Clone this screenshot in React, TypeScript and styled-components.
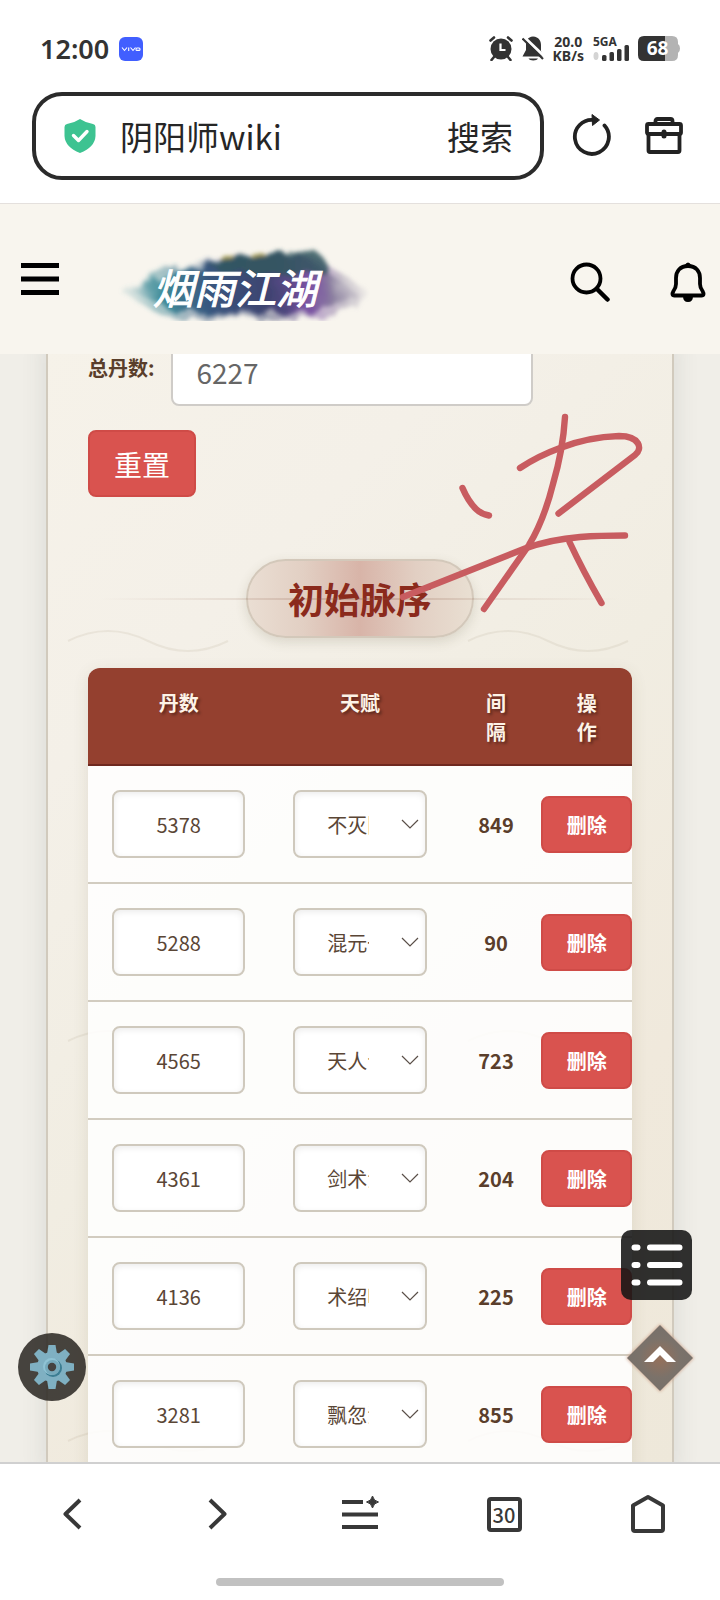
import { useState } from 'react';
import styled, { createGlobalStyle } from 'styled-components';

const fontFamily = `'Noto Sans CJK SC', 'Noto Sans', sans-serif`;

const GlobalStyle = createGlobalStyle`
  * {
    box-sizing: border-box;
  }

  body {
    margin: 0;
    background: #fff;
    font-family: ${fontFamily};
  }

  button, input, select {
    font-family: inherit;
    margin: 0;
  }
`;

const Screen = styled.div`
  display: flex;
  flex-direction: column;
  height: 100vh;
  overflow: hidden;
`;

const StatusBar = styled.div`
  display: flex;
  align-items: center;
  justify-content: space-between;
  height: 92px;
  padding: 5px 40px 0;
  color: #333;
`;

const StatusGroup = styled.div<{ $gap: number }>`
  display: flex;
  align-items: center;
  gap: ${({ $gap }) => $gap}px;
`;

const Clock = styled.span`
  font-family: 'Noto Sans', sans-serif;
  font-size: 27px;
  font-weight: 600;
  line-height: 32px;
`;

const NetSpeed = styled.span`
  font-family: 'Noto Sans', sans-serif;
  font-size: 14px;
  font-weight: 700;
  line-height: 14px;
  text-align: center;
  white-space: pre-line;
`;

const AddressRow = styled.div`
  display: flex;
  align-items: center;
  height: 112px;
  padding: 0 36px 24px 32px;
  border-bottom: 1px solid #e4e0dd;
`;

const SearchBox = styled.form`
  display: flex;
  flex: 1;
  align-items: center;
  min-width: 0;
  height: 88px;
  padding: 0 27px 0 28px;
  border: 4px solid #2b2b2b;
  border-radius: 30px;
`;

const UrlInput = styled.input`
  flex: 1;
  min-width: 0;
  padding: 0;
  margin-left: 24px;
  border: none;
  outline: none;
  background: transparent;
  color: #262626;
  font-size: 33px;
`;

const SearchButton = styled.button`
  padding: 0;
  border: none;
  background: none;
  color: #262626;
  font-size: 33px;
  cursor: pointer;
`;

const IconButton = styled.button<{ $left?: number }>`
  display: flex;
  flex: none;
  align-items: center;
  justify-content: center;
  width: 40px;
  height: 40px;
  margin-left: ${({ $left }) => $left ?? 0}px;
  padding: 0;
  border: none;
  background: none;
  color: #222;
  cursor: pointer;
`;

const SiteHeader = styled.header`
  display: flex;
  align-items: center;
  height: 150px;
  padding: 0 12px 0 20px;
  background: #f8f5ee;
  color: #000;
`;

const HeaderActions = styled.div`
  display: flex;
  gap: 58px;
  padding-top: 6px;
`;

const LogoLink = styled.a`
  display: flex;
  margin-left: 54px;
  margin-right: auto;
  padding-top: 4px;
`;

const Viewport = styled.main`
  position: relative;
  flex: 1;
  min-height: 0;
  overflow: hidden;
  background: #f0eee8;
`;

const Panel = styled.div`
  position: relative;
  margin: -16px 46px 0;
  padding: 0 40px;
  border: 2px solid #d1cabd;
  border-top: none;
  background: linear-gradient(135deg, #f6f2e9 0%, #f4f0e8 25%, #f1ede2 50%, #f0e9dc 75%, #eee8da 100%);
  box-shadow: 0 0 24px rgba(60, 70, 70, 0.12);
`;

const Waves = styled.svg`
  position: absolute;
  inset: 0;
  width: 100%;
  height: 100%;
  pointer-events: none;
`;

const Content = styled.div`
  position: relative;
`;

const FieldRow = styled.div`
  display: flex;
  align-items: center;
  gap: 16px;
`;

const FieldLabel = styled.label`
  padding-bottom: 10px;
  color: #5a3e2b;
  font-size: 20px;
  font-weight: 700;
  white-space: nowrap;
`;

const TotalInput = styled.input`
  width: 362px;
  height: 68px;
  padding: 0 24px;
  border: 2px solid #cfccc8;
  border-radius: 8px;
  background: #fff;
  color: #666;
  font-size: 28px;
`;

const ResetRow = styled.div`
  padding-top: 24px;
`;

const DangerButton = styled.button<{ $large?: boolean }>`
  display: block;
  width: ${({ $large }) => ($large ? 'auto' : '100%')};
  height: ${({ $large }) => ($large ? 67 : 57)}px;
  padding: 0 ${({ $large }) => ($large ? 24 : 0)}px;
  border: 2px solid #cf4b47;
  border-radius: 8px;
  background: #d9534f;
  color: #fff;
  font-size: ${({ $large }) => ($large ? 28 : 20)}px;
  font-weight: ${({ $large }) => ($large ? 400 : 700)};
  cursor: pointer;
`;

const SectionHeading = styled.div`
  position: relative;
  display: flex;
  justify-content: center;
  padding: 62px 0 30px;
`;

const HeadingPill = styled.h2`
  margin: 0;
  padding: 0 40px;
  border: 2px solid #d3c8ba;
  border-radius: 40px;
  background: linear-gradient(90deg, #eaded3 0%, #e2cfc3 25%, #d8b4a8 50%, #e2cfc3 75%, #e9dfd2 100%);
  box-shadow: 0 4px 12px rgba(90, 80, 50, 0.16);
  color: #8b2a1c;
  font-size: 36px;
  font-weight: 700;
  line-height: 75px;
`;

const HeadingLine = styled.span`
  position: absolute;
  top: 101px;
  left: 0;
  right: 0;
  height: 2px;
  background: linear-gradient(90deg, transparent 2%, rgba(139, 90, 70, 0.25) 50%, transparent 98%);
`;

const Scribble = styled.svg`
  position: absolute;
  top: -87px;
  right: -18px;
  pointer-events: none;
`;

const Table = styled.table`
  width: 100%;
  table-layout: fixed;
  border-collapse: separate;
  border-spacing: 0;
  border-radius: 12px 12px 0 0;
  overflow: hidden;
  background: rgba(255, 255, 255, 0.86);
  box-shadow: 0 4px 16px rgba(90, 80, 50, 0.12);
`;

const HeadCell = styled.th<{ $width: string }>`
  width: ${({ $width }) => $width};
  padding: 20px 30px 18px;
  border-bottom: 2px solid #6e281f;
  background: #94402f;
  color: #fdf3e7;
  font-size: 20px;
  font-weight: 700;
  line-height: 29px;
  text-align: center;
  text-shadow: 2px 2px 3px rgba(0, 0, 0, 0.4);
  vertical-align: top;
`;

const Cell = styled.td<{ $pad?: number }>`
  height: 118px;
  padding: 0 ${({ $pad }) => $pad ?? 0}px;
  border-bottom: 2px solid #d2ccc0;
  color: #5a3e2b;
  font-size: 20px;
  text-align: center;
  vertical-align: middle;
`;

const Interval = styled.span`
  font-weight: 700;
`;

const NumberInput = styled.input`
  display: block;
  width: 100%;
  height: 68px;
  padding: 0 8px;
  border: 2px solid #cfc9bd;
  border-radius: 8px;
  background: #fff;
  box-shadow: inset 0 2px 6px rgba(0, 0, 0, 0.08);
  color: #5a4636;
  font-size: 20px;
  text-align: center;
`;

const SelectWrap = styled.div`
  position: relative;

  svg {
    position: absolute;
    top: 28px;
    right: 8px;
    pointer-events: none;
  }
`;

const TalentSelect = styled.select`
  display: block;
  width: 100%;
  height: 68px;
  padding: 0 56px 0 32px;
  border: 2px solid #cfc9bd;
  border-radius: 8px;
  appearance: none;
  background: #fff;
  box-shadow: inset 0 2px 6px rgba(0, 0, 0, 0.08);
  color: #5a4636;
  font-size: 20px;
`;

const FloatingButton = styled.button`
  position: absolute;
  display: flex;
  align-items: center;
  justify-content: center;
  padding: 0;
  border: none;
  background: none;
  cursor: pointer;
`;

const TocButton = styled(FloatingButton)`
  right: 28px;
  bottom: 162px;
  width: 71px;
  height: 70px;
  border-radius: 10px;
  background: rgba(20, 20, 20, 0.88);
`;

const TopButton = styled(FloatingButton)`
  right: 24px;
  bottom: 68px;
  width: 72px;
  height: 72px;
`;

const SettingsButton = styled(FloatingButton)`
  left: 18px;
  bottom: 61px;
  width: 68px;
  height: 68px;
  border-radius: 50%;
  background: rgba(42, 38, 34, 0.86);
`;

const BottomBar = styled.footer`
  height: 138px;
  border-top: 2px solid #d0d0d0;
  background: #fff;
`;

const BottomNav = styled.nav`
  display: grid;
  grid-template-columns: repeat(5, 1fr);
  justify-items: center;
  padding-top: 30px;
`;

const TabCount = styled.span`
  display: flex;
  align-items: center;
  justify-content: center;
  width: 35px;
  height: 35px;
  border: 4px solid #383838;
  border-radius: 4px;
  color: #383838;
  font-size: 20px;
  font-weight: 500;
`;

const HomeIndicator = styled.div`
  width: 40%;
  height: 8px;
  margin: 44px auto 0;
  border-radius: 4px;
  background: #c1c1c1;
`;

const initialRows = [
  { count: 5378, talent: '不灭阳', interval: 849 },
  { count: 5288, talent: '混元一', interval: 90 },
  { count: 4565, talent: '天人合', interval: 723 },
  { count: 4361, talent: '剑术法', interval: 204 },
  { count: 4136, talent: '术绍明', interval: 225 },
  { count: 3281, talent: '飘忽法', interval: 855 },
];

const columns = [
  { title: '丹数', width: '33.333%' },
  { title: '天赋', width: '33.333%' },
  { title: '间隔', width: '16.667%' },
  { title: '操作', width: '16.667%' },
];

const gearTeeth = [0, 45, 90, 135, 180, 225, 270, 315];

function StatusIcons() {
  return (
    <StatusGroup $gap={8}>
      <svg width="25" height="25" viewBox="0 0 25 25" aria-hidden="true">
        <circle cx="12" cy="13" r="10.5" fill="#333" />
        <path d="M1.5 4.5 L5 1.5 M22.5 4.5 L19 1.5 M5 21 L2.5 24 M19 21 L21.5 24" stroke="#333" strokeWidth="2.6" strokeLinecap="round" />
        <path d="M11.5 7.5 V14 H16.5" fill="none" stroke="#fff" strokeWidth="2.2" />
      </svg>
      <svg width="23" height="25" viewBox="0 0 23 25" aria-hidden="true">
        <path d="M11 0.5 C5.5 1 4 5 4 9 V14 L0.5 20.5 H21.5 L19 15 V9 C19 5 17 1 11 0.5 Z" fill="#333" />
        <path d="M6.5 22.5 H16 C15 25 7.5 25 6.5 22.5 Z" fill="#333" />
        <path d="M2 1 L23 21" stroke="#fff" strokeWidth="3" />
        <path d="M0.5 2.5 L21 23" stroke="#333" strokeWidth="2.2" />
      </svg>
      <NetSpeed>{'20.0\nKB/s'}</NetSpeed>
      <svg width="38" height="34" viewBox="0 0 38 34" aria-label="5GA" role="img">
        <text x="1" y="14" fill="#333" fontFamily="Noto Sans, sans-serif" fontSize="12" fontWeight="700">5GA</text>
        <ellipse cx="4" cy="24" rx="2.5" ry="4" fill="#d4d4d4" />
        <rect x="10" y="23" width="4.5" height="6" rx="1.5" fill="#333" />
        <rect x="17.5" y="20" width="4.5" height="9" rx="1.5" fill="#333" />
        <rect x="25" y="17" width="4.5" height="12" rx="1.5" fill="#333" />
        <rect x="32.5" y="13" width="4.5" height="16" rx="1.5" fill="#333" />
      </svg>
      <svg width="42" height="25" viewBox="0 0 42 25" aria-label="68%" role="img">
        <path d="M6 0 H27 V25 H6 Q0 25 0 19 V6 Q0 0 6 0 Z" fill="#333" />
        <path d="M27 0 H34 Q40 0 40 6 V8 Q42 9 42 12.5 Q42 16 40 17 V19 Q40 25 34 25 H27 Z" fill="#b3b3b3" />
        <text x="19.5" y="19" fill="#fff" fontFamily="Noto Sans, sans-serif" fontSize="19" fontWeight="700" textAnchor="middle">68</text>
      </svg>
    </StatusGroup>
  );
}

function SiteLogo() {
  return (
    <svg width="256" height="80" viewBox="0 0 256 80" role="img" aria-label="烟雨江湖">
      <defs>
        <linearGradient id="ink" x1="0" x2="1">
          <stop offset="0" stopColor="#5a9aa6" stopOpacity="0.2" />
          <stop offset="0.14" stopColor="#3e8c99" />
          <stop offset="0.34" stopColor="#39577f" />
          <stop offset="0.62" stopColor="#3d426f" />
          <stop offset="0.8" stopColor="#7b52a3" />
          <stop offset="0.9" stopColor="#8b809f" />
          <stop offset="1" stopColor="#a9a4b4" stopOpacity="0.2" />
        </linearGradient>
        <filter id="rough" x="-10%" y="-20%" width="120%" height="140%">
          <feTurbulence type="fractalNoise" baseFrequency="0.06" numOctaves="4" seed="4" />
          <feDisplacementMap in="SourceGraphic" scale="16" />
          <feGaussianBlur stdDeviation="2" />
        </filter>
      </defs>
      <g filter="url(#rough)">
        <path d="M6 50 Q40 28 80 24 Q150 6 200 16 Q220 28 254 50 Q240 66 214 76 Q150 80 116 76 Q60 82 40 70 Z" fill="url(#ink)" opacity="0.45" />
        <path d="M18 48 Q60 28 92 26 Q150 8 190 14 Q210 30 240 50 Q220 66 192 72 Q110 72 60 70 Z" fill="url(#ink)" />
        <path d="M96 28 Q130 8 200 10 Q218 20 214 32 Q160 38 96 28 Z" fill="#33575f" opacity="0.85" />
        <path d="M108 14 h12 v6 h-12 Z M136 10 h14 v5 h-14 Z" fill="#a39a4f" />
      </g>
      <text
        x="121"
        y="63"
        fill="#fff"
        stroke="#fff"
        strokeWidth="1"
        fontFamily="Noto Sans CJK SC, sans-serif"
        fontSize="41"
        fontStyle="italic"
        fontWeight="400"
        textAnchor="middle"
      >
        烟雨江湖
      </text>
    </svg>
  );
}

function TalentRow(props: { count: number; talent: string; interval: number; onDelete: () => void }) {
  return (
    <tr>
      <Cell $pad={24}>
        <NumberInput defaultValue={props.count} aria-label="丹数" />
      </Cell>
      <Cell $pad={24}>
        <SelectWrap>
          <TalentSelect defaultValue={props.talent} aria-label="天赋">
            {initialRows.map(row => (
              <option key={row.talent}>{row.talent}</option>
            ))}
          </TalentSelect>
          <svg width="18" height="12" viewBox="0 0 18 12" aria-hidden="true">
            <path d="M1 2 L9 10 L17 2" fill="none" stroke="#5a4f48" strokeWidth="1.2" />
          </svg>
        </SelectWrap>
      </Cell>
      <Cell>
        <Interval>{props.interval}</Interval>
      </Cell>
      <Cell>
        <DangerButton onClick={props.onDelete}>删除</DangerButton>
      </Cell>
    </tr>
  );
}

export default function App() {
  const [rows, setRows] = useState(initialRows);

  return (
    <Screen>
      <GlobalStyle />

      <StatusBar>
        <StatusGroup $gap={10}>
          <Clock>12:00</Clock>
          <svg width="24" height="24" viewBox="0 0 24 24" role="img" aria-label="vivo">
            <rect width="24" height="24" rx="6" fill="#415fff" />
            <g fill="none" stroke="#fff" strokeWidth="1.1">
              <path d="M3 10.5 L5.5 13.5 L8 10.5 M9.7 10.5 V14 M11.5 10.5 L14 13.5 L16.5 10.5" />
              <rect x="17" y="11" width="4" height="2.4" rx="1" />
            </g>
          </svg>
        </StatusGroup>
        <StatusIcons />
      </StatusBar>

      <AddressRow>
        <SearchBox onSubmit={e => e.preventDefault()}>
          <svg width="32" height="34" viewBox="0 0 32 34" aria-hidden="true">
            <path d="M16 0 Q22 4 29 5 Q31.5 5.5 31.5 8 V17 Q31 28 16 34 Q1 28 0.5 17 V8 Q0.5 5.5 3 5 Q10 4 16 0 Z" fill="#3dc391" />
            <path d="M9.5 16.5 L14.5 21.5 L23 12.5" fill="none" stroke="#fff" strokeWidth="3.4" strokeLinecap="round" strokeLinejoin="round" />
          </svg>
          <UrlInput defaultValue="阴阳师wiki" aria-label="网址" />
          <SearchButton type="submit">搜索</SearchButton>
        </SearchBox>
        <IconButton $left={28} aria-label="刷新">
          <svg width="40" height="44" viewBox="0 0 40 44">
            <path d="M22 6 A17 17 0 1 0 32.5 11.5" fill="none" stroke="#222" strokeWidth="3.8" strokeLinecap="round" />
            <path d="M20 0.5 L27.5 6 L20.5 11.5 Z" fill="#222" stroke="#222" strokeWidth="1" strokeLinejoin="round" />
          </svg>
        </IconButton>
        <IconButton $left={32} aria-label="工具箱">
          <svg width="40" height="40" viewBox="0 0 40 40" fill="none" stroke="#222" strokeWidth="3.8" strokeLinejoin="round">
            <rect x="3" y="8" width="34" height="10" rx="1.5" />
            <path d="M4.5 18 V34.5 Q4.5 36 6 36 H34 Q35.5 36 35.5 34.5 V18" />
            <path d="M11.5 8 V5 Q11.5 3 13.5 3 H26.5 Q28.5 3 28.5 5 V8" />
            <path d="M20 16 V20" strokeWidth="5" strokeLinecap="round" />
          </svg>
        </IconButton>
      </AddressRow>

      <SiteHeader>
        <IconButton aria-label="菜单">
          <svg width="40" height="34" viewBox="0 0 40 34" stroke="#000" strokeWidth="5">
            <path d="M1 3.5 H39 M1 17 H39 M1 30.5 H39" />
          </svg>
        </IconButton>
        <LogoLink href="#">
          <SiteLogo />
        </LogoLink>
        <HeaderActions>
          <IconButton aria-label="搜索">
            <svg width="40" height="40" viewBox="0 0 40 40" fill="none" stroke="#000" strokeWidth="3.8" strokeLinecap="round">
              <circle cx="16.5" cy="16.5" r="14" />
              <path d="M27 27 L37.5 37.5" strokeWidth="4.5" />
            </svg>
          </IconButton>
          <IconButton aria-label="通知">
            <svg width="36" height="40" viewBox="0 0 36 40">
              <path
                d="M18 4 C10 4 6 9.5 6 16 V22 Q6 25.5 3.5 29 Q1 33.5 4.5 33.5 H31.5 Q35 33.5 32.5 29 Q30 25.5 30 22 V16 C30 9.5 26 4 18 4 Z"
                fill="none"
                stroke="#000"
                strokeWidth="3.8"
                strokeLinejoin="round"
              />
              <path d="M14.5 3.5 Q18 -2.5 21.5 3.5 Z" fill="#000" />
              <path d="M13 34 H23 Q23 40 18 40 Q13 40 13 34 Z" fill="#000" />
            </svg>
          </IconButton>
        </HeaderActions>
      </SiteHeader>

      <Viewport>
        <Panel>
          <Waves aria-hidden="true">
            <defs>
              <pattern id="waves" width="400" height="400" y="103" patternUnits="userSpaceOnUse">
                <path d="M20 200 Q60 180 100 200 T180 200" fill="none" stroke="#8b7355" strokeOpacity="0.1" strokeWidth="2" />
              </pattern>
            </defs>
            <rect width="100%" height="100%" fill="url(#waves)" />
          </Waves>

          <Content>
            <FieldRow>
              <FieldLabel htmlFor="total">总丹数:</FieldLabel>
              <TotalInput id="total" defaultValue="6227" />
            </FieldRow>
            <ResetRow>
              <DangerButton $large onClick={() => setRows(initialRows)}>重置</DangerButton>
            </ResetRow>

            <SectionHeading>
              <HeadingPill>初始脉序</HeadingPill>
              <HeadingLine />
              <Scribble width="250" height="206" viewBox="400 410 250 206" aria-hidden="true">
                <g fill="none" stroke="#c85c60" strokeWidth="6.4" strokeLinecap="round" strokeLinejoin="round">
                  <path d="M462.5 488 Q468 501 476 509 Q481 514 489 515.5" />
                  <path d="M565 417 Q563 450 553 484 Q544 520 529 545 L484 609" />
                  <path d="M520 468 Q538 456 560 448 Q588 437 619 436 C640 436 643 449 635 455 L558.5 513.5" />
                  <path d="M403 597 L525 548.5 Q550 539.5 580 537 Q600 535.5 625 535.5" />
                  <path d="M569.5 542 Q583 571 601.5 603" />
                </g>
              </Scribble>
            </SectionHeading>

            <Table>
              <thead>
                <tr>
                  {columns.map(column => (
                    <HeadCell key={column.title} $width={column.width}>
                      {column.title}
                    </HeadCell>
                  ))}
                </tr>
              </thead>
              <tbody>
                {rows.map(row => (
                  <TalentRow
                    key={row.count}
                    {...row}
                    onDelete={() => setRows(rows.filter(item => item !== row))}
                  />
                ))}
              </tbody>
            </Table>
          </Content>
        </Panel>

        <TocButton aria-label="目录">
          <svg width="52" height="44" viewBox="0 0 52 44" fill="none" stroke="#fff" strokeWidth="6" strokeLinecap="round">
            <path d="M3.5 4.5 H6.5 M19 4.5 H48.5 M3.5 22 H6.5 M19 22 H48.5 M3.5 39.5 H6.5 M19 39.5 H48.5" />
          </svg>
        </TocButton>
        <TopButton aria-label="回到顶部">
          <svg width="72" height="72" viewBox="0 0 72 72">
            <defs>
              <radialGradient id="diamond">
                <stop offset="0" stopColor="#96705a" />
                <stop offset="0.6" stopColor="#7b726a" />
                <stop offset="1" stopColor="#77706a" />
              </radialGradient>
              <filter id="glow">
                <feGaussianBlur stdDeviation="1.5" />
              </filter>
            </defs>
            <path d="M36 2 L70 36 L36 70 L2 36 Z" fill="#c99a80" opacity="0.7" filter="url(#glow)" />
            <path d="M36 3 L69 36 L36 69 L3 36 Z" fill="url(#diamond)" />
            <path d="M20 40 L36 24 L52 40 H43 L36 33 L29 40 Z" fill="#fff" />
          </svg>
        </TopButton>
        <SettingsButton aria-label="设置">
          <svg width="46" height="46" viewBox="0 0 46 46">
            <g fill="#7fb0c2">
              {gearTeeth.map(angle => (
                <path key={angle} d="M18 10 L19.5 1 H26.5 L28 10 Z" transform={`rotate(${angle} 23 23)`} />
              ))}
              <circle cx="23" cy="23" r="15" />
            </g>
            <circle cx="24" cy="24" r="9" fill="#3c7d92" />
            <circle cx="22.5" cy="22.5" r="8.5" fill="#8fc3d4" />
            <circle cx="23.5" cy="23.5" r="7.5" fill="#76a9bb" />
            <circle cx="23" cy="23" r="4.2" fill="#454240" />
          </svg>
        </SettingsButton>
      </Viewport>

      <BottomBar>
        <BottomNav>
          <IconButton aria-label="后退">
            <svg width="20" height="32" viewBox="0 0 20 32" fill="none" stroke="#383838" strokeWidth="4" strokeLinejoin="round">
              <path d="M18 2 L3.5 16 L18 30" />
            </svg>
          </IconButton>
          <IconButton aria-label="前进">
            <svg width="24" height="32" viewBox="-4 0 24 32" fill="none" stroke="#383838" strokeWidth="4" strokeLinejoin="round">
              <path d="M2 2 L16.5 16 L2 30" />
            </svg>
          </IconButton>
          <IconButton aria-label="更多">
            <svg width="38" height="38" viewBox="0 0 38 38">
              <path d="M1 7 H22 M1 19.5 H37 M1 32 H37" stroke="#383838" strokeWidth="4" />
              <path d="M31.5 1 Q32.5 6 37.5 7 Q32.5 8 31.5 13 Q30.5 8 25.5 7 Q30.5 6 31.5 1 Z" fill="#383838" stroke="#383838" />
            </svg>
          </IconButton>
          <IconButton aria-label="标签页">
            <TabCount>30</TabCount>
          </IconButton>
          <IconButton aria-label="主页">
            <svg width="36" height="40" viewBox="0 0 36 40" fill="none" stroke="#383838" strokeWidth="4" strokeLinejoin="round">
              <path d="M18 3 L33 11.5 V35 Q33 37 31 37 H5 Q3 37 3 35 V11.5 Z" />
            </svg>
          </IconButton>
        </BottomNav>
        <HomeIndicator />
      </BottomBar>
    </Screen>
  );
}
